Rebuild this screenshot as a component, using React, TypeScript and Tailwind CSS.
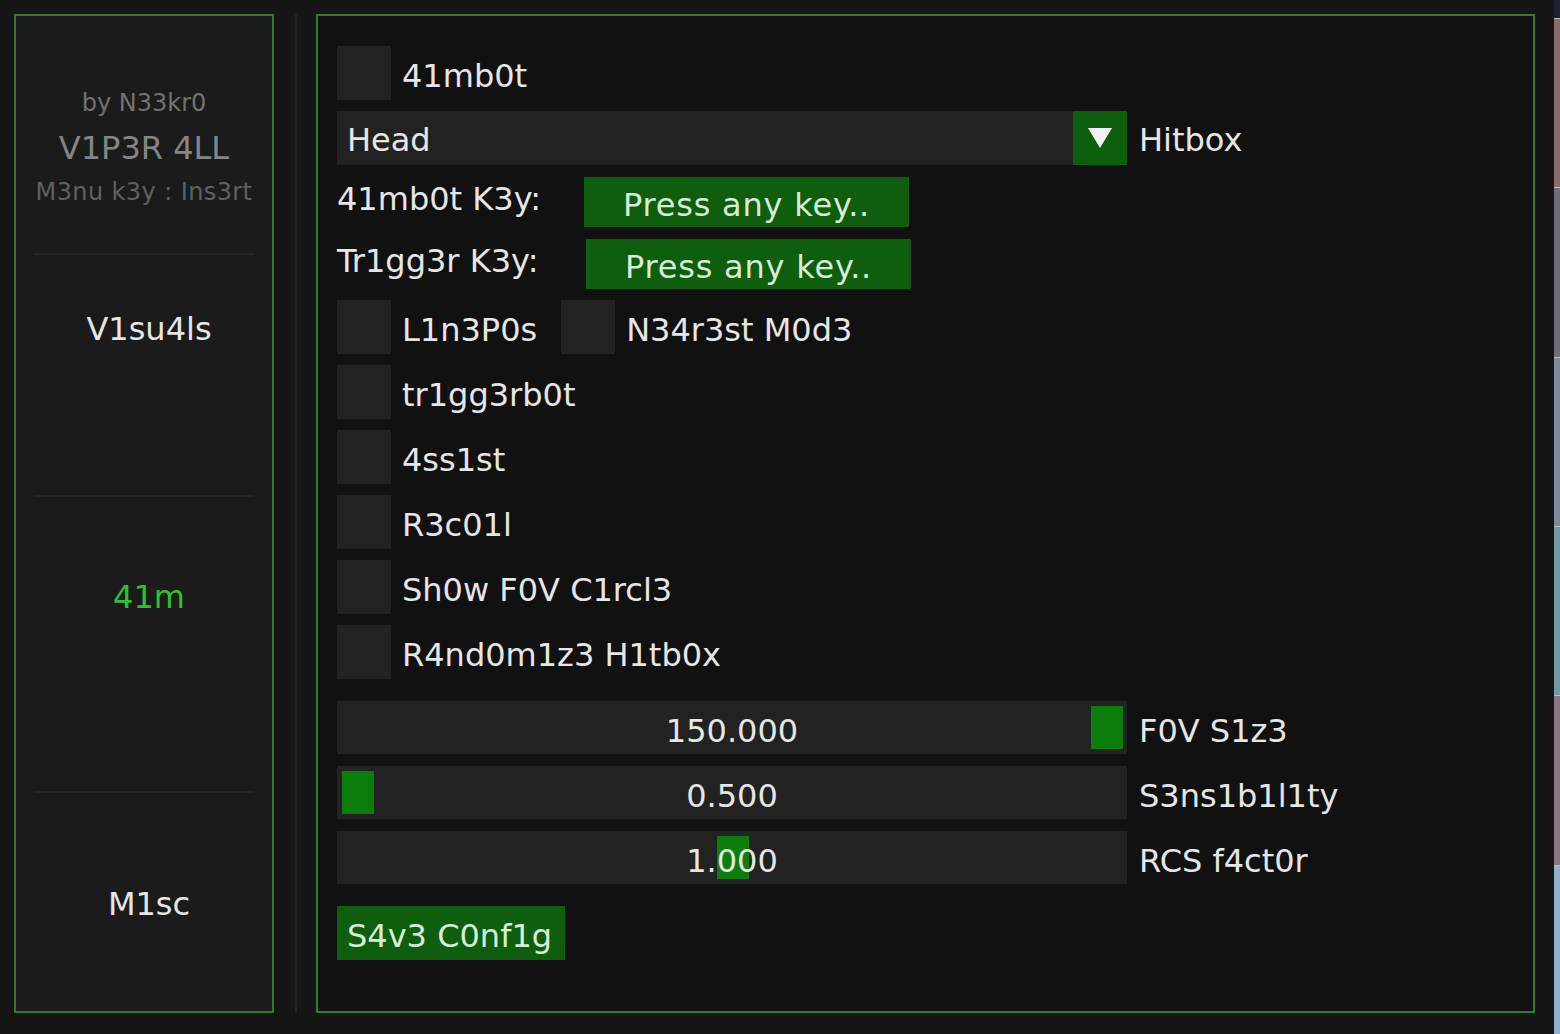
import React from "react";

type SliderRow = { value: string; label: string; frac: number };

const sliders: SliderRow[] = [
  { value: "150.000", label: "F0V S1z3", frac: 1 },
  { value: "0.500", label: "S3ns1b1l1ty", frac: 0 },
  { value: "1.000", label: "RCS f4ct0r", frac: 0.5 },
];

const toggles = ["tr1gg3rb0t", "4ss1st", "R3c01l", "Sh0w F0V C1rcl3", "R4nd0m1z3 H1tb0x"];

// thumbnails of whatever sits behind the overlay, peeking out on the right edge
const strip = ["#1b2233", "#8a6c66", "#6d6f76", "#7d8c9c", "#6f9aa8", "#8c7487", "#8fb0c8"];

function Box() {
  return <div className="w-[54px] h-[54px] bg-[#222222] shrink-0" />;
}

function Check({ label }: { label: string }) {
  return (
    <div className="flex items-center h-[54px]">
      <Box />
      <span className="ml-[11px] pt-[5px] leading-[40px]">{label}</span>
    </div>
  );
}

function KeyBind({ label, offset }: { label: string; offset: string }) {
  return (
    <div className="flex items-center h-[51px]">
      <span className="w-[247px] pb-[6px] leading-[40px]">{label}</span>
      <div className={`${offset} w-[325px] h-[50px] bg-[#0e5e0e] flex items-center justify-center text-[#d6edd6]`}>
        <span className="pt-[6px] leading-[40px] tracking-[0.8px]">Press any key..</span>
      </div>
    </div>
  );
}

function Slider({ value, label, frac }: SliderRow) {
  const left = 5 + frac * 749;
  return (
    <div className="flex items-center h-[53px]">
      <div className="relative w-[790px] h-[53px] bg-[#222222] flex items-center justify-center">
        <div className="absolute top-[5px] bottom-[5px] w-[32px] bg-[#0b7d0b]" style={{ left }} />
        <span className="relative pt-[6px] leading-[40px]">{value}</span>
      </div>
      <span className="ml-[12px] pt-[6px] leading-[40px]">{label}</span>
    </div>
  );
}

function Sidebar() {
  return (
    <div className="mt-[14px] ml-[14px] w-[260px] h-[999px] border-2 border-[#2d7f2d] bg-[#1b1b1b] flex flex-col shrink-0">
      <div className="flex flex-col items-center pt-[72px]">
        <div className="text-[24px] leading-[30px] text-[#727272]">by N33kr0</div>
        <div className="mt-[10px] text-[32px] leading-[40px] text-[#858585]">V1P3R 4LL</div>
        <div className="mt-[9px] text-[24px] leading-[30px] text-[#606060] tracking-[0.4px]">M3nu k3y : Ins3rt</div>
      </div>
      <div className="mt-[46px] mx-[18px] h-[2px] bg-[#252525]" />
      <div className="h-[240px] pt-[54px] pl-[10px] text-center leading-[40px] text-[#e6e6e6]">V1su4ls</div>
      <div className="mx-[18px] h-[2px] bg-[#252525]" />
      <div className="h-[294px] pt-[80px] pl-[10px] text-center leading-[40px] text-[#2fc12f]">41m</div>
      <div className="mx-[18px] h-[2px] bg-[#252525]" />
      <div className="flex-1 pt-[91px] pl-[10px] text-center leading-[40px] text-[#e6e6e6]">M1sc</div>
    </div>
  );
}

export default function App() {
  return (
    <div className="w-[1560px] h-[1034px] bg-[#151515] flex font-['DejaVu_Sans',sans-serif] text-[32px] overflow-hidden">
      <Sidebar />

      <div className="mt-[14px] ml-[21px] w-[2px] h-[999px] bg-[#242424] shrink-0" />

      <div className="mt-[14px] ml-[19px] w-[1219px] h-[999px] border-2 border-[#2d7f2d] bg-[#111111] shrink-0 pl-[19px] pt-[30px] text-[#e6e6e6] flex flex-col">
        <Check label="41mb0t" />

        <div className="mt-[11px] flex items-center h-[54px]">
          <div className="w-[790px] h-[54px] bg-[#222222] flex items-center">
            <span className="flex-1 pl-[10px] pt-[4px] leading-[40px]">Head</span>
            <div className="w-[54px] h-[54px] bg-[#0c5f0c] flex items-center justify-center">
              <svg width="26" height="22" viewBox="0 0 26 22">
                <path d="M1 1 L25 1 L13 21 Z" fill="#f2f2f2" />
              </svg>
            </div>
          </div>
          <span className="ml-[12px] pt-[4px] leading-[40px]">Hitbox</span>
        </div>

        <div className="mt-[11px] flex flex-col gap-[11px]">
          <KeyBind label="41mb0t K3y:" offset="ml-0" />
          <KeyBind label="Tr1gg3r K3y:" offset="ml-[2px]" />
        </div>

        <div className="mt-[11px] flex flex-col gap-[11px]">
          <div className="flex items-center">
            <Check label="L1n3P0s" />
            <div className="ml-[24px]">
              <Check label="N34r3st M0d3" />
            </div>
          </div>
          {toggles.map((t) => (
            <Check key={t} label={t} />
          ))}
        </div>

        <div className="mt-[22px] flex flex-col gap-[12px]">
          {sliders.map((s) => (
            <Slider key={s.label} {...s} />
          ))}
        </div>

        <div className="mt-[22px] w-[228px] h-[54px] bg-[#0e5e0e] flex items-center pl-[10px] text-[#d6edd6]">
          <span className="pt-[6px] leading-[40px]">S4v3 C0nf1g</span>
        </div>
      </div>

      <div className="flex-1" />
      <div className="w-[6px] h-full flex flex-col shrink-0">
        <div className="h-[18px] bg-[#1b2233]" />
        {strip.slice(1).map((c, i) => (
          <div key={i} className="flex-1 border-t border-[#b8c0c8]" style={{ backgroundColor: c }} />
        ))}
      </div>
    </div>
  );
}
